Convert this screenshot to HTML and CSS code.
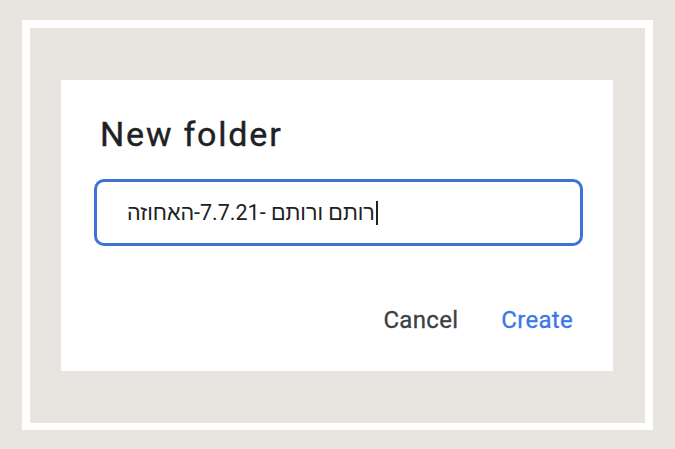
FILE: index.html
```html
<!DOCTYPE html>
<html lang="en">
<head>
<meta charset="utf-8">
<title>New folder</title>
<link rel="stylesheet" href="styles.css">
</head>
<body>
<div class="frame">
  <div class="dialog">
    <h1 class="title">New folder</h1>
    <div class="field">
      <span class="value" dir="ltr">רותם ורותם -7.7.21-האחוזה</span><span class="caret"></span>
    </div>
    <div class="actions">
      <span class="btn cancel">Cancel</span>
      <span class="btn create">Create</span>
    </div>
  </div>
</div>
</body>
</html>
```
FILE: styles.css
```css
html, body {
  margin: 0;
  padding: 0;
}
body {
  background: #e8e4e0;
  width: 675px;
  height: 449px;
  box-sizing: border-box;
  padding: 20px 22px 19px 22px;
  font-family: Roboto, "Liberation Sans", "DejaVu Sans", sans-serif;
}
.frame {
  border: 8px solid #ffffff;
  border-bottom-width: 7px;
  padding: 52px 32px 52px 31px;
  background: #e8e4e0;
}
.dialog {
  background: #ffffff;
  height: 291px;
  box-sizing: border-box;
  padding: 34px 30px 0 33px;
}
.title {
  margin: 0 0 0 6px;
  font-size: 34px;
  line-height: 40px;
  font-weight: 400;
  letter-spacing: 1.8px;
  color: #202124;
  -webkit-text-stroke: 0.4px #202124;
}
.field {
  margin-top: 25px;
  height: 67px;
  box-sizing: border-box;
  border: 3px solid #3d72d8;
  border-radius: 10px;
  display: flex;
  align-items: center;
  padding-left: 30px;
  font-size: 21.5px;
  color: #202124;
}
.value {
  unicode-bidi: isolate;
}
.caret {
  display: inline-block;
  width: 0;
  height: 24px;
  border-left: 2px solid #202124;
  margin-left: 1px;
}
.actions {
  margin-top: 60px;
  display: flex;
  justify-content: flex-end;
  gap: 43px;
  padding-right: 10px;
  font-size: 24px;
  line-height: 28px;
  font-weight: 400;
  letter-spacing: 0.3px;
}
.cancel {
  color: #3c4043;
  -webkit-text-stroke: 0.3px #3c4043;
}
.create {
  color: #3b78e7;
  -webkit-text-stroke: 0.3px #3b78e7;
}
```
